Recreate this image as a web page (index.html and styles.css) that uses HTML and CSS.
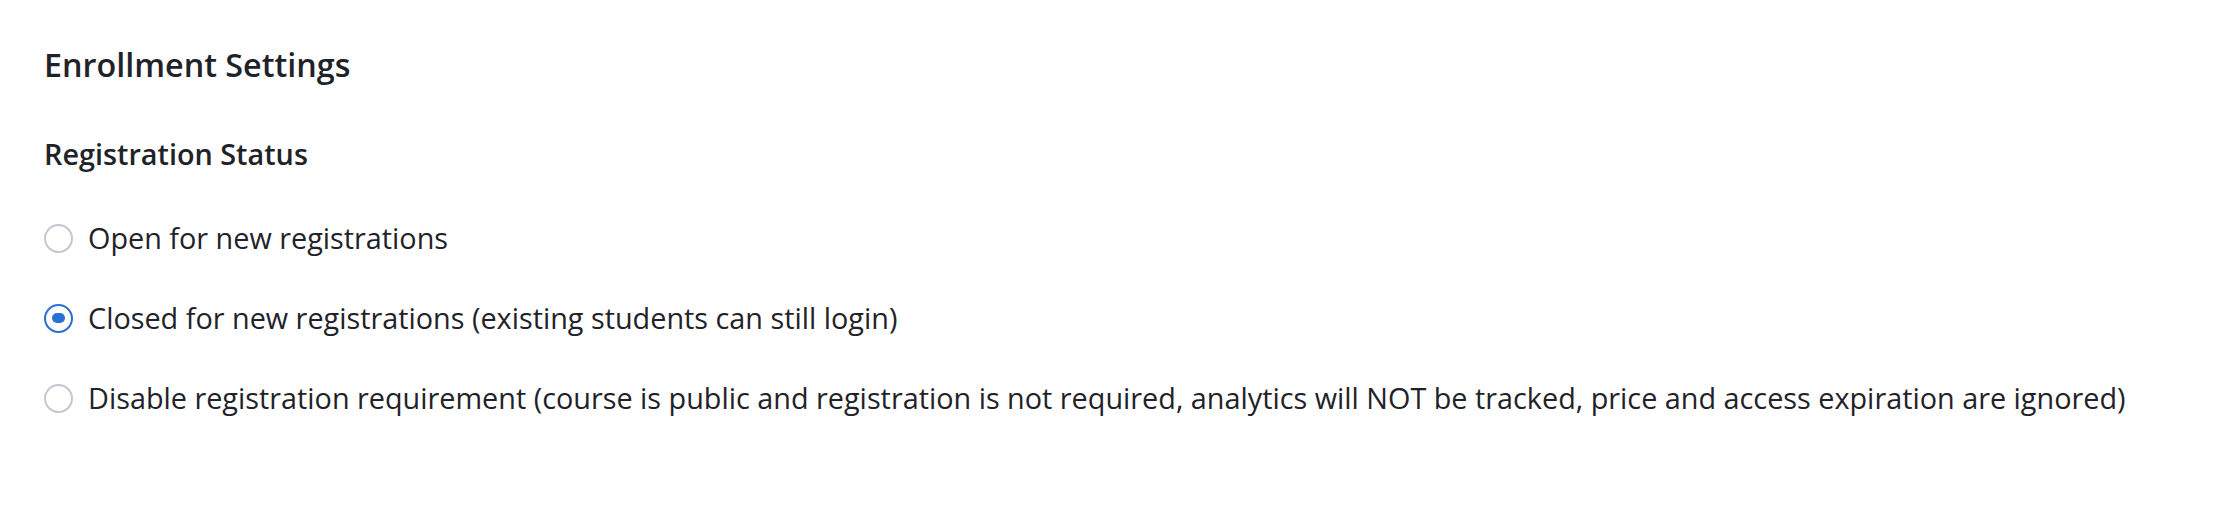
FILE: index.html
```html
<!DOCTYPE html>
<html lang="en">
<head>
    <meta charset="UTF-8">
    <meta name="viewport" content="width=device-width, initial-scale=1.0">
    <title>Enrollment Settings</title>
    <link rel="stylesheet" href="styles.css">
</head>
<body>
    <div class="container">
        <h2>Enrollment Settings</h2>

        <div class="form-group">
            <h3>Registration Status</h3>

            <label class="radio-row">
                <input type="radio" name="status" value="open">
                <span class="radio"></span>
                <span>Open for new registrations</span>
            </label>

            <label class="radio-row">
                <input type="radio" name="status" value="closed" checked>
                <span class="radio"></span>
                <span>Closed for new registrations (existing students can still login)</span>
            </label>

            <label class="radio-row">
                <input type="radio" name="status" value="public">
                <span class="radio"></span>
                <span>Disable registration requirement (course is public and registration is not required, analytics will NOT be tracked, price and access expiration are ignored)</span>
            </label>
        </div>
    </div>
</body>
</html>
```

FILE: styles.css
```css
body {
    font-family: "Open Sans", Arial, sans-serif;
    margin: 0;
    padding: 0;
    background-color: #ffffff;
    color: #1f2329;
}
.container {
    padding: 40px 44px;
}
h2 {
    margin: 0 0 44px;
    font-size: 32.3px;
    line-height: 48px;
    font-weight: 600;
}
h3 {
    margin: 0 0 42px;
    font-size: 28.8px;
    line-height: 43px;
    font-weight: 600;
}
.radio-row {
    display: flex;
    align-items: center;
    gap: 15px;
    font-size: 28.8px;
    line-height: 42px;
    margin-bottom: 38px;
    cursor: pointer;
}
.radio-row input {
    display: none;
}
.radio {
    box-sizing: border-box;
    width: 29px;
    height: 29px;
    border: 2px solid #c3c8d1;
    border-radius: 50%;
    display: flex;
    align-items: center;
    justify-content: center;
    flex-shrink: 0;
}
.radio-row input:checked + .radio {
    border-color: #2a6fd3;
}
.radio-row input:checked + .radio::after {
    content: "";
    width: 13px;
    height: 10px;
    border-radius: 5px;
    background-color: #2a6fd3;
}
```
